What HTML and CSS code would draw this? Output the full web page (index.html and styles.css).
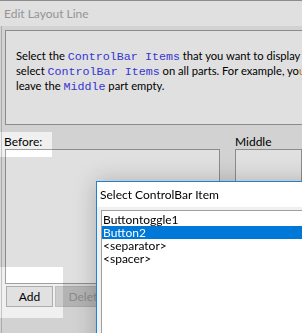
FILE: index.html
```html
<!DOCTYPE html>
<html lang="en">
<head>
  <meta charset="UTF-8">
  <meta name="viewport" content="width=device-width, initial-scale=1">
  <title>Edit Layout Line</title>
  <link rel="stylesheet" href="styles.css">
</head>
<body>

<div class="window">
  <div class="titlebar">Edit Layout Line</div>
  <div class="content">
    <div class="info">
      <p>Select the <code>ControlBar Items</code> that you want to display <span class="hint">in each</span></p>
      <p>select <code>ControlBar Items</code> on all parts. For example, yo<span class="hint">u</span></p>
      <p>leave the <code>Middle</code> part empty.</p>
    </div>
    <div class="parts">
      <div class="part before">
        <div class="part-label">Before:</div>
        <div class="part-list"></div>
      </div>
      <div class="part middle">
        <div class="part-label">Middle</div>
        <div class="part-list"></div>
      </div>
    </div>
    <div class="buttons">
      <button class="btn">Add</button>
      <button class="btn" disabled>Delete</button>
    </div>
  </div>
</div>

<div class="dim"></div>

<div class="popup">
  <div class="popup-title">Select ControlBar Item</div>
  <div class="popup-body">
    <ul class="item-list">
      <li>Buttontoggle1</li>
      <li class="selected">Button2</li>
      <li>&lt;separator&gt;</li>
      <li>&lt;spacer&gt;</li>
    </ul>
  </div>
</div>

</body>
</html>
```

FILE: styles.css
```css
html, body {
  margin: 0;
  height: 100%;
  overflow: hidden;
}
body {
  font-family: Lato, "Liberation Sans", sans-serif;
  font-size: 12px;
  color: #000;
  background: #f0f0f0;
}
.window {
  border-top: 1px solid #a0a0a0;
  height: 100%;
  box-sizing: border-box;
}
.titlebar {
  height: 25px;
  line-height: 25px;
  padding-left: 4px;
  background: #fff;
  color: #aaa;
}
.content {
  margin-left: 1px;
  border-left: 1px solid #c4c4c4;
  padding: 4px 0 0 3px;
  height: 100%;
}
.info {
  box-sizing: border-box;
  height: 95px;
  border: 1px solid #a0a0a0;
  border-right: none;
  background: #fff;
  padding: 18px 0 0 10px;
  white-space: nowrap;
  overflow: hidden;
  font-size: 11.2px;
}
.info p {
  margin: 0;
  line-height: 14px;
}
.info code {
  font-family: "Liberation Mono", monospace;
  font-size: 11.7px;
  color: #4040f0;
}
.hint {
  color: #e08a10;
}
.parts {
  display: flex;
  gap: 15px;
  margin-top: 10px;
}
.part-label {
  line-height: 14px;
}
.before .part-label {
  margin-left: -1px;
}
.part-list {
  box-sizing: border-box;
  height: 135px;
  border: 1px solid #a0a0a0;
  background: #fff;
}
.before {
  width: 215px;
  flex: none;
}
.middle {
  flex: 1;
}
.buttons {
  display: flex;
  gap: 2px;
  margin: 2px 0 0 1px;
}
.btn {
  font: inherit;
  width: 47px;
  height: 21px;
  padding: 0;
  background: #e1e1e1;
  border: 1px solid #adadad;
  color: #000;
}
.btn:disabled {
  width: 62px;
  background: #cccccc;
  border-color: #bfbfbf;
  color: #a0a0a0;
}
.dim {
  position: fixed;
  inset: 0;
  background: rgba(0, 0, 0, 0.12);
  clip-path: path(evenodd, "M0 0H302V333H0Z M0 132H52V157H0Z M0 267H63V318H0Z");
}
.popup {
  position: absolute;
  left: 96px;
  top: 181px;
  width: 240px;
  height: 200px;
  border: 1px solid #1883d7;
  background: #f0f0f0;
  box-shadow: 0 0 22px rgba(0, 0, 0, 0.22);
}
.popup-title {
  height: 25px;
  line-height: 25px;
  padding-left: 3px;
  background: #fff;
}
.popup-body {
  padding: 3px 0 0 4px;
}
.item-list {
  list-style: none;
  margin: 0;
  padding: 2px 0 0;
  height: 160px;
  border: 1px solid #a0a0a0;
  border-right: none;
  background: #fff;
}
.item-list li {
  line-height: 13px;
  padding-left: 1px;
}
.item-list .selected {
  background: #0078d7;
  color: #fff;
}
```
